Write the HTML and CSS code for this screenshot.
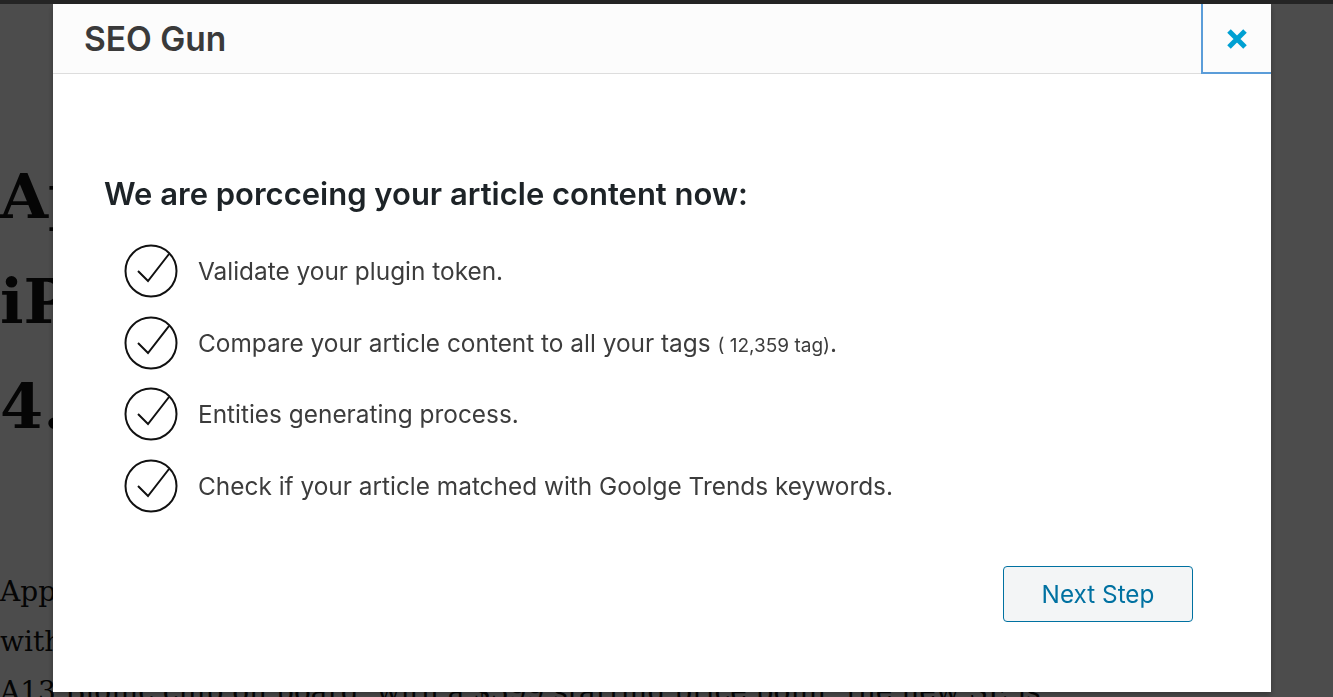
FILE: index.html
```html
<!DOCTYPE html>
<html lang="en">
<head>
<meta charset="utf-8">
<title>SEO Gun</title>
<link rel="stylesheet" href="styles.css">
</head>
<body>
<div class="topbar"></div>
<main class="article">
  <h1 class="article-title">Apple launches new<br>iPhone SE with<br>4.7-inch display</h1>
  <p class="article-text">Apple has unveiled its second-generation iPhone SE,<br>with a familiar design and the same powerful<br>A13 Bionic chip on board, with a $399 starting price point, the new SE is</p>
</main>
<div class="overlay"></div>
<div class="modal" role="dialog">
  <header class="modal-header">
    <h2 class="modal-title">SEO Gun</h2>
    <button class="close-btn" aria-label="Close">
      <svg width="22" height="22" viewBox="0 0 22 22"><path d="M3 3 L19 19 M19 3 L3 19" stroke="#00a0d2" stroke-width="5" stroke-linecap="butt" fill="none"/></svg>
    </button>
  </header>
  <section class="modal-body">
    <h3 class="heading">We are porcceing your article content now:</h3>
    <ul class="steps">
      <li class="step">
        <svg class="check" width="54" height="54" viewBox="0 0 54 54"><circle cx="27" cy="27" r="25.5" fill="none" stroke="#111" stroke-width="2"/><path d="M14 27 L24 37 L45 10" fill="none" stroke="#111" stroke-width="2"/></svg>
        <span>Validate your plugin token.</span>
      </li>
      <li class="step">
        <svg class="check" width="54" height="54" viewBox="0 0 54 54"><circle cx="27" cy="27" r="25.5" fill="none" stroke="#111" stroke-width="2"/><path d="M14 27 L24 37 L45 10" fill="none" stroke="#111" stroke-width="2"/></svg>
        <span>Compare your article content to all your tags <small class="count">( 12,359 tag)</small>.</span>
      </li>
      <li class="step">
        <svg class="check" width="54" height="54" viewBox="0 0 54 54"><circle cx="27" cy="27" r="25.5" fill="none" stroke="#111" stroke-width="2"/><path d="M14 27 L24 37 L45 10" fill="none" stroke="#111" stroke-width="2"/></svg>
        <span>Entities generating process.</span>
      </li>
      <li class="step">
        <svg class="check" width="54" height="54" viewBox="0 0 54 54"><circle cx="27" cy="27" r="25.5" fill="none" stroke="#111" stroke-width="2"/><path d="M14 27 L24 37 L45 10" fill="none" stroke="#111" stroke-width="2"/></svg>
        <span>Check if your article matched with Goolge Trends keywords.</span>
      </li>
    </ul>
    <div class="actions">
      <button class="next-btn">Next Step</button>
    </div>
  </section>
</div>
</body>
</html>
```
FILE: styles.css
```css
html, body {
  margin: 0;
  padding: 0;
  height: 100%;
  overflow: hidden;
}
body {
  background: #ffffff;
  font-family: "DejaVu Serif", serif;
  color: #111;
}
.topbar {
  height: 4px;
  background: #7a7a7a;
}
.article {
  padding: 0;
}
.article-title {
  margin: 140px 0 0 0;
  font-size: 62px;
  line-height: 105px;
  font-weight: bold;
  white-space: nowrap;
}
.article-text {
  margin: 108px 0 0 0;
  font-size: 28px;
  line-height: 50px;
  white-space: nowrap;
}
.overlay {
  position: fixed;
  inset: 0;
  background: rgba(0, 0, 0, 0.7);
}
.modal {
  position: fixed;
  left: 53px;
  top: 4px;
  width: 1218px;
  height: 688px;
  background: #fff;
  box-shadow: 0 3px 6px rgba(0, 0, 0, 0.3);
  font-family: "Inter", "Noto Sans", sans-serif;
  display: flex;
  flex-direction: column;
}
.modal-header {
  height: 69px;
  background: #fcfcfc;
  border-bottom: 1px solid #dddddd;
  display: flex;
  align-items: center;
  justify-content: space-between;
}
.modal-title {
  margin: 0 0 0 31px;
  font-size: 33.5px;
  font-weight: 600;
  color: #3a3a3a;
}
.close-btn {
  width: 70px;
  height: 70px;
  align-self: flex-start;
  background: #fcfcfc;
  border: none;
  box-shadow: inset 2px -2px 0 #5b9dd9;
  display: flex;
  align-items: center;
  justify-content: center;
  padding: 0 0 0 2px;
  margin-bottom: -1px;
}
.modal-body {
  flex: 1;
  padding: 100px 78px 0 51px;
  display: flex;
  flex-direction: column;
}
.heading {
  margin: 0;
  font-size: 31px;
  font-weight: 600;
  color: #1d2327;
  line-height: 40px;
}
.steps {
  list-style: none;
  margin: 30px 0 0 20px;
  padding: 0;
  display: flex;
  flex-direction: column;
  gap: 17.67px;
}
.step {
  display: flex;
  align-items: center;
  gap: 20px;
  font-size: 24.4px;
  color: #3c3c3c;
  height: 54px;
}
.check {
  flex: none;
}
.count {
  font-size: 19px;
}
.actions {
  display: flex;
  justify-content: flex-end;
  margin-top: 53px;
}
.next-btn {
  width: 190px;
  height: 56px;
  border: 1.5px solid #0071a1;
  border-radius: 4px;
  background: #f3f5f6;
  color: #0071a1;
  font-family: "Inter", "Noto Sans", sans-serif;
  font-size: 24.3px;
}
```
